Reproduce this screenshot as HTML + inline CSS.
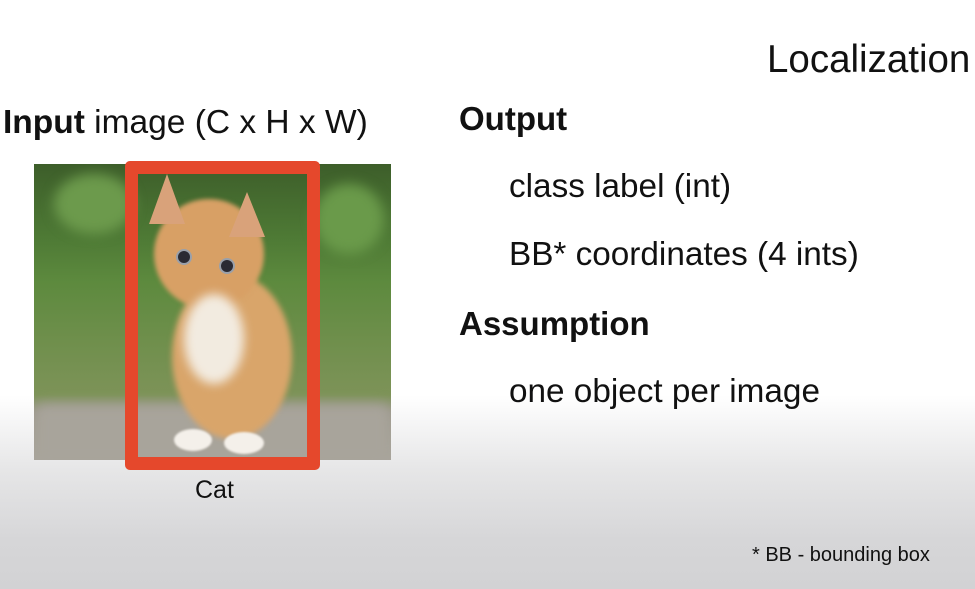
<!DOCTYPE html>
<html><head><meta charset="utf-8"><style>
html,body{margin:0;padding:0}
body{width:975px;height:589px;position:relative;overflow:hidden;font-family:"Liberation Sans",Arial,sans-serif;color:#111;
background:linear-gradient(to bottom,#fff 0px,#fff 395px,#e6e6e7 470px,#d6d6d8 540px,#d2d2d4 589px);}
.t{position:absolute;white-space:nowrap}
.img{position:absolute;left:34px;top:164px;width:357px;height:296px;overflow:hidden;
background:linear-gradient(to bottom,#3d5e2a 0%,#4e7a35 25%,#5d8a3e 40%,#6f8f4c 60%,#7d9358 78%,#9a9688 84%,#a9a59c 100%);}
.blob{position:absolute;border-radius:50%;filter:blur(6px)}
.box{position:absolute;left:125px;top:161px;width:169px;height:283px;border:13px solid #e5482c;border-radius:5px}
</style></head><body>
<div class="t" style="left:767px;top:38px;font-size:38.5px">Localization</div>
<div class="t" style="left:3px;top:104px;font-size:33.5px"><b>Input</b> image (C x H x W)</div>
<div class="t" style="left:459px;top:100px;font-size:33px;font-weight:bold">Output</div>
<div class="t" style="left:509px;top:168px;font-size:33.3px">class label (int)</div>
<div class="t" style="left:509px;top:236px;font-size:33.3px">BB* coordinates (4 ints)</div>
<div class="t" style="left:459px;top:305px;font-size:33px;font-weight:bold">Assumption</div>
<div class="t" style="left:509px;top:373px;font-size:33.3px">one object per image</div>
<div class="t" style="left:195px;top:476px;font-size:25px">Cat</div>
<div class="t" style="left:752px;top:544px;font-size:20px">* BB - bounding box</div>
<div class="img">
 <div class="blob" style="left:20px;top:10px;width:80px;height:60px;background:#6c9a4c"></div>
 <div class="blob" style="left:280px;top:20px;width:70px;height:70px;background:#6a9a4a"></div>
 <div class="blob" style="left:0;top:240px;width:357px;height:60px;background:#a8a49b;border-radius:10px"></div>
 <div class="blob" style="left:138px;top:110px;width:120px;height:165px;background:#d9a56a;filter:blur(3px)"></div>
 <div class="blob" style="left:120px;top:35px;width:110px;height:110px;background:#d8a065;filter:blur(2px)"></div>
 <div style="position:absolute;left:115px;top:10px;width:0;height:0;border-left:18px solid transparent;border-right:18px solid transparent;border-bottom:50px solid #d9a27a"></div>
 <div style="position:absolute;left:195px;top:28px;width:0;height:0;border-left:18px solid transparent;border-right:18px solid transparent;border-bottom:45px solid #d9a27a"></div>
 <div class="blob" style="left:150px;top:130px;width:60px;height:90px;background:#f2ebe0;filter:blur(5px)"></div>
 <div style="position:absolute;left:144px;top:87px;width:12px;height:12px;border-radius:50%;background:#2a2a33;box-shadow:0 0 0 2px #9aa0aa"></div>
 <div style="position:absolute;left:187px;top:96px;width:12px;height:12px;border-radius:50%;background:#2a2a33;box-shadow:0 0 0 2px #9aa0aa"></div>
 <div class="blob" style="left:140px;top:265px;width:38px;height:22px;background:#f4f0ea;filter:blur(1px)"></div>
 <div class="blob" style="left:190px;top:268px;width:40px;height:22px;background:#f4f0ea;filter:blur(1px)"></div>
</div>
<div class="box"></div>
</body></html>
